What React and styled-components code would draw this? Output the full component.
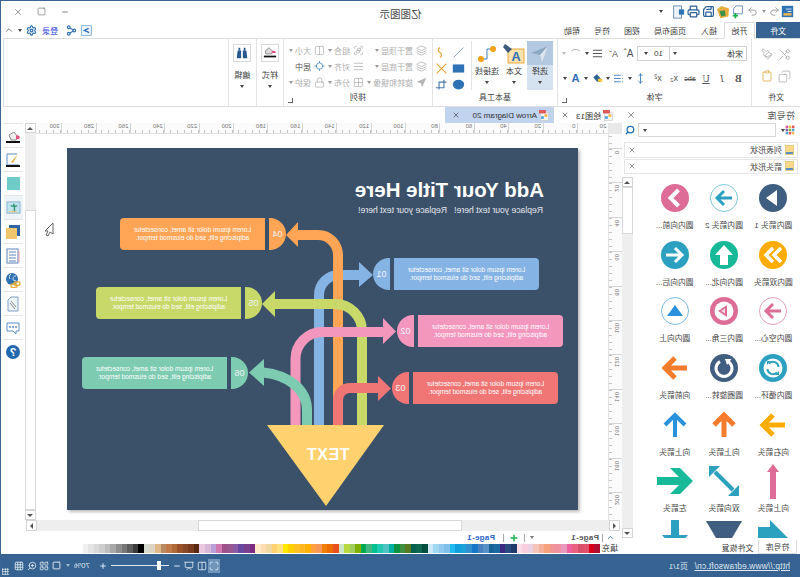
import React from 'react'
import styled, { createGlobalStyle } from 'styled-components'
import {
  X, Minus, Square, Undo2, Redo2, Save, Printer, Settings, Share2, Scissors, Copy, Clipboard,
  Lock, Search, Plus, ChevronUp, Grid3x3, ZoomIn, LayoutGrid, Maximize, Columns2, Presentation,
  AlignJustify, List, Layers, Group as GroupIcon, Grid2x2, Locate, MoveVertical, Paintbrush,
} from 'lucide-react'

// the reference is a horizontally flipped window, so the page is written the normal way round
// and Shell flips all of it, text included

const GlobalStyle = createGlobalStyle`
  html, body { margin: 0; padding: 0; background: #fff; overflow: hidden; }
  body { font-family: "Liberation Sans", "Noto Sans CJK SC", sans-serif; }
  * { box-sizing: border-box; }
`

const Shell = styled.div`
  width: 800px;
  height: 577px;
  display: flex;
  flex-direction: column;
  overflow: hidden;
  background: #fff;
  color: #3c3c3c;
  border-top: 1px solid #3a6592;
  border-right: 1px solid #3a6592;
  transform: scaleX(-1);
`

const Caret = styled.span`
  display: inline-block;
  width: 0;
  height: 0;
  flex: none;
  border-left: 2.5px solid transparent;
  border-right: 2.5px solid transparent;
  border-top: 3px solid ${p => p.$color || '#444'};
`

/* title bar */
const TitleBar = styled.div`
  height: 21px;
  flex: none;
  display: grid;
  grid-template-columns: 1fr auto 1fr;
  align-items: center;
`
const QuickBar = styled.div`
  display: flex;
  align-items: center;
  padding-left: 5px;
`
const QuickCell = styled.span`
  width: ${p => p.$w}px;
  height: 16px;
  display: flex;
  align-items: center;
  justify-content: center;
`
const Title = styled.div`
  font-size: 10.5px;
  color: #444;
  margin-top: 3px;
`
const WindowButtons = styled.div`
  display: flex;
  justify-content: flex-end;
  align-items: center;
  padding-right: 5px;
  color: #666;
`
const WindowButton = styled.span`
  width: 23.5px;
  display: flex;
  justify-content: center;
`

/* menu tabs */
const MenuBar = styled.div`
  height: 16px;
  flex: none;
  display: flex;
  align-items: stretch;
  font-size: 8px;
`
const FileTab = styled.div`
  width: 44px;
  margin-right: 1px;
  background: #366391;
  color: #fff;
  display: flex;
  align-items: center;
  justify-content: center;
`
const HomeTab = styled.div`
  width: 31px;
  border: 1px solid #dcdcdc;
  border-bottom: 1px solid #fff;
  margin-bottom: -1px;
  background: #fff;
  position: relative;
  z-index: 1;
  display: flex;
  align-items: center;
  justify-content: center;
`
const MenuItem = styled.div`
  margin-left: ${p => p.$gap}px;
  display: flex;
  align-items: center;
  white-space: nowrap;
`
const MenuRight = styled.div`
  margin-left: auto;
  padding-right: 3px;
  display: flex;
  align-items: center;
  gap: 4px;
`
const Login = styled.span`
  color: #2b3fe0;
  font-size: 8px;
  width: 17px;
  margin: 0 0 0 4px;
  white-space: nowrap;
`

/* ribbon */
const Ribbon = styled.div`
  height: 69px;
  flex: none;
  margin-right: 2px;
  display: flex;
  border: 1px solid #dedede;
  border-left: 0;
  background: #fff;
`
const Group = styled.div`
  width: ${p => p.$w}px;
  flex: ${p => (p.$w ? 'none' : '1')};
  display: flex;
  flex-direction: column;
  border-right: 1px solid #e3e3e3;
  position: relative;
  &:last-child { border-right: 0; }
`
const GroupBody = styled.div`
  flex: 1;
  display: flex;
  min-height: 0;
  padding: ${p => p.$pad || '0'};
`
const GroupLabel = styled.div`
  height: 15px;
  flex: none;
  font-size: 8px;
  text-align: center;
  line-height: 14px;
  color: #444;
`
const Launcher = styled.span`
  position: absolute;
  right: 4px;
  bottom: 3px;
  width: 5px;
  height: 5px;
  border-left: 1px solid #666;
  border-bottom: 1px solid #666;
`
const ClipGrid = styled.div`
  display: grid;
  grid-template-columns: 17px 17px;
  grid-auto-rows: 22px;
  padding: 4px 0 0 7px;
  align-items: center;
  justify-items: center;
  color: #a8a8a8;
`
const FontRows = styled.div`
  display: flex;
  flex-direction: column;
  width: 100%;
`
const FontRow = styled.div`
  height: ${p => p.$h}px;
  display: flex;
  align-items: center;
  padding-left: 4px;
  padding-top: 3px;
`
const FontCombo = styled.div`
  width: 110px;
  height: 15px;
  flex: none;
  margin-right: 1px;
  border: 1px solid #d0d0d0;
  display: flex;
  align-items: center;
  font-size: 8px;
`
const FontName = styled.span`
  flex: 1;
  padding-left: 3px;
`
const FontSize = styled.span`
  width: 32px;
  height: 100%;
  margin-left: 3px;
  border-left: 1px solid #d0d0d0;
  display: flex;
  align-items: center;
  justify-content: space-around;
  font-size: 8px;
  padding: 0 3px;
`
const FontTool = styled.span`
  width: ${p => p.$w || 16}px;
  flex: none;
  display: flex;
  align-items: center;
  justify-content: center;
  font-family: ${p => (p.$serif ? '"Liberation Serif", serif' : 'inherit')};
  font-weight: ${p => (p.$bold ? 700 : 400)};
  font-style: ${p => (p.$italic ? 'italic' : 'normal')};
  text-decoration: ${p => p.$deco || 'none'};
  font-size: ${p => p.$size || 9}px;
  color: ${p => p.$color || '#555'};
  white-space: nowrap;
`
const ToolButton = styled.div`
  width: ${p => p.$w}px;
  height: 49px;
  flex: none;
  display: flex;
  flex-direction: column;
  align-items: center;
  font-size: 8px;
  background: ${p => (p.$active ? 'linear-gradient(#b3c9e1 0 24px, #d5e2f0 24px)' : 'transparent')};
`
const ToolIcon = styled.div`
  height: 25px;
  display: flex;
  align-items: center;
  justify-content: center;
`
const ToolText = styled.div`
  height: 11px;
  line-height: 11px;
  margin-bottom: 4px;
  white-space: nowrap;
`
const VerticalRule = styled.div`
  width: 1px;
  height: 49px;
  background: #e3e3e3;
  margin: 0 4px 0 1px;
  flex: none;
`
const ShapeGrid = styled.div`
  display: grid;
  grid-template-columns: 17px 17px;
  grid-auto-rows: 16px;
  align-items: center;
  justify-items: center;
  padding-top: 3px;
`
const ArrangeGrid = styled.div`
  display: grid;
  grid-template-columns: 63px 39px 1fr;
  grid-auto-rows: 16px;
  padding: 3px 0 0 5px;
  width: 100%;
`
const ArrangeItem = styled.div`
  display: flex;
  align-items: center;
  gap: 2px;
  font-size: 8px;
  white-space: nowrap;
  color: ${p => (p.$on ? '#555' : '#adadad')};
`
const ArrangeIcon = styled.span`
  width: 11px;
  display: flex;
  justify-content: center;
  margin-right: 1px;
  flex: none;
`
const BigStack = styled.div`
  width: 100%;
  display: flex;
  flex-direction: column;
  align-items: center;
  font-size: 8px;
  color: #444;
  padding-top: 5px;
`
const BigIconBox = styled.div`
  width: 18px;
  height: 18px;
  border: 1px solid #d9d9d9;
  display: flex;
  align-items: center;
  justify-content: center;
  margin-bottom: 7px;
`
const BigCaret = styled.div`
  margin-top: 5px;
  display: flex;
`

/* workspace */
const Workspace = styled.div`
  flex: 1;
  min-height: 0;
  display: flex;
`
const Panel = styled.div`
  width: 178px;
  flex: none;
  display: flex;
  flex-direction: column;
`
const PanelHeader = styled.div`
  height: 16px;
  flex: none;
  display: flex;
  align-items: center;
  justify-content: space-between;
  padding: 0 4px 0 5px;
  font-size: 9px;
  letter-spacing: 0.3px;
  color: #555;
`
const SearchRow = styled.div`
  height: 14px;
  flex: none;
  display: flex;
  align-items: center;
  padding-left: 5px;
  margin-bottom: 5px;
`
const SearchInput = styled.div`
  width: 138px;
  height: 14px;
  margin-left: 5px;
  border: 1px solid #d8d8d8;
  display: flex;
  align-items: center;
  justify-content: flex-end;
  padding-right: 4px;
`
const SearchIcon = styled.span`
  margin-left: 3px;
  color: #1f6fb5;
  display: flex;
`
const ListRow = styled.div`
  height: 15.5px;
  flex: none;
  margin: 0 2px 1px 2px;
  border: 1px solid #e6e6e6;
  display: flex;
  align-items: center;
  gap: 3px;
  padding: 0 3px;
  font-size: 8px;
  color: #444;
`
const RowIcon = styled.span`
  width: 9px;
  height: 10px;
  flex: none;
  background: linear-gradient(#f9d98a 0 70%, #5b8fc4 70%);
  border: 1px solid #e7c97f;
`
const RowClose = styled.span`
  margin-left: auto;
  display: flex;
  color: #555;
`
const PanelBody = styled.div`
  height: 361px;
  flex: none;
  margin-top: 2px;
  display: flex;
  overflow: hidden;
`
const Gallery = styled.div`
  width: 167px;
  flex: none;
  padding-left: 2px;
  display: grid;
  grid-template-columns: repeat(3, 49.3px);
  grid-auto-rows: 56.7px;
  overflow: hidden;
`
const GalleryItem = styled.div`
  display: flex;
  flex-direction: column;
  align-items: center;
  padding-top: 3px;
`
const GalleryLabel = styled.div`
  margin-top: 5px;
  height: 10px;
  line-height: 10px;
  font-size: 7.8px;
  white-space: nowrap;
  color: #444;
`
const PanelTabs = styled.div`
  height: 14px;
  flex: none;
  margin-top: 2px;
  padding-left: 3px;
  display: flex;
  align-items: stretch;
  font-size: 8px;
`
const PanelTab = styled.div`
  width: ${p => p.$w}px;
  display: flex;
  align-items: center;
  justify-content: center;
  border: ${p => (p.$active ? '1px solid #dcdcdc' : '0')};
  border-top: 0;
  white-space: nowrap;
`

const ScrollTrack = styled.div`
  width: 11px;
  flex: none;
  display: flex;
  flex-direction: column;
  background: #eeeeee;
`
const ScrollButton = styled.div`
  width: 100%;
  height: 10px;
  flex: none;
  background: #fff;
  border: 1px solid #d4d4d4;
  display: flex;
  align-items: center;
  justify-content: center;
  font-size: 0;
`
const ScrollUp = styled.span`
  width: 0;
  height: 0;
  border-left: 3px solid transparent;
  border-right: 3px solid transparent;
  border-bottom: 3px solid #555;
`
const ScrollDown = styled(ScrollUp)`
  border-bottom: 0;
  border-top: 3px solid #555;
`
const ScrollGap = styled.div`
  height: ${p => p.$h}px;
  flex: ${p => (p.$h ? 'none' : '1')};
`
const ScrollThumb = styled.div`
  height: ${p => p.$h}px;
  flex: none;
  background: #fff;
  border: 1px solid #d8d8d8;
`

const EditorColumn = styled.div`
  flex: 1;
  min-width: 0;
  display: flex;
  flex-direction: column;
`
const DocTabs = styled.div`
  height: 16px;
  flex: none;
  display: flex;
  font-size: 8px;
`
const DocTab = styled.div`
  width: ${p => p.$w}px;
  display: flex;
  align-items: center;
  gap: 2px;
  padding: 0 7px 0 ${p => p.$pad}px;
  white-space: nowrap;
  background: ${p => (p.$active ? '#c1d3ee' : 'transparent')};
  color: #333;
`
const DocClose = styled.span`
  margin-left: auto;
  display: flex;
  color: #444;
`
const EditorRow = styled.div`
  height: 397px;
  flex: none;
  display: flex;
`
const CanvasArea = styled.div`
  flex: 1;
  min-width: 0;
  display: flex;
  flex-direction: column;
`
const RulerTop = styled.div`
  height: 11px;
  flex: none;
  display: flex;
`
const RulerCorner = styled.div`
  width: 14px;
  flex: none;
  background: #e9e9e9;
`
const RulerTrack = styled.div`
  flex: 1;
  min-width: 0;
  display: flex;
  overflow: hidden;
  background: #fbfbfb;
  border-bottom: 1px solid #e2e2e2;
`
const RulerCell = styled.div`
  width: 34.4px;
  flex: none;
  margin-left: ${p => (p.$first ? -4.4 : 0)}px;
  font-size: 6px;
  line-height: 7px;
  color: #777;
  padding-left: ${p => (p.$first ? 5 : 1.5)}px;
  border-left: 1px solid #d5d5d5;
  background: repeating-linear-gradient(90deg, #c4c4c4 0 1px, transparent 1px 6.88px) left bottom / 100% 3px no-repeat;
`
const CanvasRow = styled.div`
  flex: 1;
  min-height: 0;
  display: flex;
`
const RulerSide = styled.div`
  width: 14px;
  flex: none;
  display: flex;
  flex-direction: column;
  overflow: hidden;
  background: #fbfbfb;
  border-right: 1px solid #e2e2e2;
`
const RulerSideCell = styled.div`
  height: 34.4px;
  flex: none;
  margin-top: ${p => (p.$first ? -20.4 : 0)}px;
  font-size: 6px;
  color: #777;
  display: flex;
  justify-content: flex-start;
  padding: 2px 0 0 2px;
  border-top: 1px solid #d5d5d5;
  background: repeating-linear-gradient(180deg, #c4c4c4 0 1px, transparent 1px 6.88px) right top / 3px 100% no-repeat;
  span { writing-mode: vertical-rl; transform: rotate(180deg); height: fit-content; }
`
const Canvas = styled.div`
  flex: 1;
  min-width: 0;
  padding: 14px 0 0 30px;
  position: relative;
  overflow: hidden;
  background: #fff;
`
const Cursor = styled.svg`
  position: absolute;
  left: 554px;
  top: 88px;
`

/* slide */
const Slide = styled.div`
  width: 511px;
  height: 362px;
  position: relative;
  background: #3b5069;
  box-shadow: -2px 2px 3px #bdbdbd;
  overflow: hidden;
`
const SlideTitle = styled.div`
  position: absolute;
  left: 34px;
  top: 30px;
  font-size: 20.5px;
  font-weight: 700;
  color: #fff;
  white-space: nowrap;
`
const SlideSub = styled.div`
  position: absolute;
  left: 35px;
  top: 57px;
  font-size: 8.6px;
  color: #e4e8ee;
  white-space: pre;
`
const Arrows = styled.svg`
  position: absolute;
  left: 0;
  top: 0;
`
const Node = styled.div`
  position: absolute;
  left: ${p => p.$x}px;
  top: ${p => p.$y}px;
  height: 32px;
  display: flex;
  flex-direction: ${p => (p.$flip ? 'row-reverse' : 'row')};
  gap: 4px;
  color: #fff;
`
const NodeCard = styled.div`
  width: 145px;
  background: ${p => p.$color};
  border-radius: ${p => (p.$flip ? '0 4px 4px 0' : '4px 0 0 4px')};
  font-size: 6.6px;
  line-height: 8.5px;
  text-align: center;
  display: flex;
  align-items: center;
  justify-content: center;
  white-space: pre;
`
const NodeCap = styled.div`
  width: 17px;
  background: ${p => p.$color};
  border-radius: ${p => (p.$flip ? '16px 0 0 16px' : '0 16px 16px 0')};
  font-size: 9px;
  color: #eef2f4;
  display: flex;
  align-items: center;
  justify-content: center;
`

const HScrollBar = styled.div`
  height: 11px;
  flex: none;
  display: flex;
  margin: 0 25px 0 2px;
  background: #eeeeee;
`
const HButton = styled.div`
  width: 11px;
  flex: none;
  background: #fff;
  border: 1px solid #d4d4d4;
  display: flex;
  align-items: center;
  justify-content: center;
`
const HArrow = styled.span`
  width: 0;
  height: 0;
  border-top: 3px solid transparent;
  border-bottom: 3px solid transparent;
  ${p => (p.$dir === 'left' ? 'border-right: 3px solid #555;' : 'border-left: 3px solid #555;')}
`
const HThumb = styled.div`
  width: 264px;
  flex: none;
  margin-left: ${p => p.$left}px;
  margin-right: auto;
  background: #fff;
  border: 1px solid #d8d8d8;
`
const PageTabs = styled.div`
  height: 13px;
  flex: none;
  display: flex;
  align-items: center;
  font-size: 8px;
  font-weight: 700;
  letter-spacing: 0.3px;
  padding-left: 7px;
  color: #555;
`
const PageLink = styled.span`
  color: #2b62c4;
  margin-left: 3px;
`
const PageCaret = styled(Caret)`
  margin-left: 37px;
`
const PageRule = styled.span`
  width: 1px;
  height: 8px;
  background: #aaa;
  margin: 0 ${p => p.$m || 5}px;
`
const PaletteRow = styled.div`
  height: 10px;
  flex: none;
  display: flex;
  align-items: stretch;
  padding-left: 4px;
  font-size: 8px;
`
const PaletteLabel = styled.span`
  width: 18px;
  flex: none;
  line-height: 10px;
`
const Swatch = styled.span`
  width: 5.57px;
  height: 9px;
  flex: none;
  background: ${p => p.$color};
`

const ToolStrip = styled.div`
  width: 22px;
  flex: none;
  padding: 0 3px 0 0;
  margin-left: 2px;
`
const StripButton = styled.div`
  height: 24px;
  border-top: 1px solid #e4e4e4;
  display: flex;
  align-items: center;
  justify-content: center;
  background: ${p => (p.$active ? '#eef3f8' : 'transparent')};
`

/* status bar */
const StatusBar = styled.div`
  height: 23px;
  flex: none;
  margin-right: -1px;
  background: #366391;
  color: #dfe8f1;
  display: flex;
  align-items: center;
  font-size: 8px;
  padding-left: 10px;
  position: relative;
`
const StatusLink = styled.span`
  text-decoration: underline;
  font-size: 8.4px;
  letter-spacing: 0.2px;
  width: 102px;
  white-space: nowrap;
`
const StatusTools = styled.div`
  margin-left: auto;
  display: flex;
  align-items: center;
  color: #dfe8f1;
  padding-right: 13px;
`
const StatusIcon = styled.span`
  width: ${p => p.$w || 12.5}px;
  height: 14px;
  display: flex;
  align-items: center;
  justify-content: center;
  background: ${p => (p.$active ? '#6f95bb' : 'transparent')};
`
const ZoomTrack = styled.span`
  width: 58px;
  height: 1px;
  background: #dfe8f1;
  position: relative;
  margin: 0 3px;
`
const ZoomThumb = styled.span`
  position: absolute;
  left: 8px;
  top: -4px;
  width: 4px;
  height: 9px;
  background: #fff;
`
const ZoomValue = styled.span`
  width: 24px;
  text-align: center;
  font-size: 8px;
  margin: 0 0 0 5px;
`
const ZoomCaret = styled(Caret)`
  margin-right: 3px;
`
const Grip = styled.span`
  position: absolute;
  right: 2px;
  bottom: 2px;
  width: 7px;
  height: 7px;
  background: radial-gradient(#dfe8f1 0 0.8px, transparent 1px) 0 0 / 2.5px 2.5px;
`

const NAVY = '#3f5e80'
const TEAL = '#2ca0bf'
const PINK = '#dd6d96'
const GOLD = '#ffac00'
const MINT = '#17b999'
const ORANGE = '#f47c2c'
const BLUE = '#2a92dc'

const Tile = ({ children }) => <svg width="36" height="36" viewBox="0 0 36 36">{children}</svg>
const Disc = ({ fill }) => <circle cx="18" cy="18" r="14" fill={fill} />
const Ring = ({ stroke }) => <circle cx="18" cy="18" r="13.5" fill="#fff" stroke={stroke} />
const Line = ({ d, color, w = 3 }) => <path d={d} fill="none" stroke={color} strokeWidth={w} />

const symbols = [
  { label: '圆内箭头 1', art: <><Disc fill={NAVY} /><polygon points="14,10 25,18 14,26" fill="#fff" /></> },
  { label: '圆内箭头 2', art: <><Ring stroke="#7cc8dc" /><Line d="M10 18H25M18 11l7 7-7 7" color={TEAL} /></> },
  { label: '圆内向前...', art: <><Disc fill={PINK} /><Line d="M14.5 10l8 8-8 8" color="#fff" w={4} /></> },
  { label: '圆内双箭头', art: <><Disc fill={GOLD} /><Line d="M10 11l7 7-7 7M18 11l7 7-7 7" color="#fff" w={3.5} /></> },
  { label: '圆内向北...', art: <><Disc fill={MINT} /><polygon points="18,8 27,18 22,18 22,28 14,28 14,18 9,18" fill="#fff" /></> },
  { label: '圆内向后...', art: <><Disc fill={TEAL} /><Line d="M27 18H11M18 11l-7 7 7 7" color="#fff" /></> },
  { label: '圆内空心...', art: <><Ring stroke="#eda0b8" /><Line d="M10 18H25M18 11l7 7-7 7" color={PINK} /></> },
  { label: '圆内三角...', art: <><Disc fill={PINK} /><circle cx="18" cy="18" r="9.5" fill="#fff" /><polygon points="15,12 24,18 15,24" fill={PINK} /><polygon points="17,15.5 21,18 17,20.5" fill="#f7d5e1" /></> },
  { label: '圆内向上', art: <><Ring stroke="#7bbce8" /><polygon points="18,12 26,23 10,23" fill={BLUE} /></> },
  { label: '圆内循环...', art: <><Disc fill={TEAL} /><circle cx="18" cy="18" r="9.5" fill="#fff" /><Line d="M12.5 17a5.5 5.5 0 0 1 9.5-3.5M23.5 19a5.5 5.5 0 0 1-9.5 3.5" color={TEAL} w={2} /><polygon points="20.5,11 24,11 24,15" fill={TEAL} /><polygon points="15.5,25 12,25 12,21" fill={TEAL} /></> },
  { label: '圆圈旋转...', art: <><Disc fill={NAVY} /><Line d="M14 11.5a8 8 0 1 0 8 0" color="#fff" /><polygon points="10.5,9 17,9 15,15" fill="#fff" /></> },
  { label: '向前箭头', art: <Line d="M6 18H27M18 8l10 10-10 10" color={ORANGE} w={5} /> },
  { label: '向右箭头', art: <Line d="M6 18H27M18 8l10 10-10 10" color={GOLD} w={5} /> },
  { label: '向上箭头', art: <Line d="M18 30V8M8 18L18 8l10 10" color={ORANGE} w={5} /> },
  { label: '向上箭头', art: <Line d="M18 30V8M8 18L18 8l10 10" color={BLUE} w={4} /> },
  { label: '向上箭头', art: <><rect x="15" y="8" width="6" height="28" fill={PINK} /><polygon points="18,1 24,9 12,9" fill={PINK} /></> },
  { label: '双向箭头', art: <><Line d="M27 9L9 27" color={TEAL} w={4} /><polygon points="33,3 33,14 22,3" fill={TEAL} /><polygon points="3,33 3,22 14,33" fill={TEAL} /></> },
  { label: '左箭头', art: <polygon points="0,18 13,5 23,5 14,14 36,14 36,22 14,22 23,31 13,31" fill={MINT} /> },
  { label: '', art: <polygon points="3,18 21,0 21,7 33,7 33,36 3,36" fill={TEAL} /> },
  { label: '', art: <polygon points="0,1 36,1 26,18 10,18" fill={NAVY} /> },
  { label: '', art: <polygon points="14,0 22,0 22,15 31,15 18,30 5,15 14,15" fill={TEAL} /> },
]

const nodes = [
  { id: '01', color: '#85b3e3', x: 39, y: 110 },
  { id: '02', color: '#f497bd', x: 15, y: 167 },
  { id: '03', color: '#f07676', x: 20, y: 224 },
  { id: '04', color: '#ffa555', x: 292, y: 70, flip: true },
  { id: '05', color: '#c8d96a', x: 316, y: 139, flip: true },
  { id: '06', color: '#7dcbb1', x: 330, y: 209, flip: true },
]

const arrows = [
  { color: '#85b3e3', d: 'M259 278V147A20 20 0 0 0 239 127H218', head: '219,114 205,127 219,139' },
  { color: '#ffa555', d: 'M240 278V107A20 20 0 0 1 260 87H281', head: '280,74 292,87 280,99' },
  { color: '#c8d96a', d: 'M216 278V183A27 27 0 0 1 243 156H304', head: '303,143 316,156 303,169' },
  { color: '#f497bd', d: 'M282.5 278V211A27 27 0 0 0 255.5 184H194', head: '195,170 182,183.5 195,196' },
  { color: '#f07676', d: 'M240 278V252A12 12 0 0 0 228 240H199', head: '200,228 187,240.5 200,253' },
  { color: '#7dcbb1', d: 'M271 278V262C271 241 290 227 315 224.5', head: '314,211 329,224.5 314,238' },
]

// image order, right to left in the flipped page
const swatches = [
  '#efefef', '#e4e4e4', '#d9d9d9', '#cdcdcd', '#bdbdbd', '#a8a8a8', '#8f8f8f', '#777', '#5e5e5e', '#3c3c3c', '#000',
  '#d5dccf', '#dcd5c4', '#e0b888', '#b88a60', '#c07a4a', '#b06838', '#9c5228', '#8a4a2a', '#7a3a20', '#5a2a10',
  '#ecc8e0', '#d8b8d8', '#b8a0d8', '#d078b0', '#a05088', '#9a5890', '#8a5ca8', '#6a4aa0', '#7a4090', '#7a2a80',
  '#fde8c8', '#fddcb0', '#f0d8a0', '#fdd070', '#fde080', '#ffe800', '#ffd000', '#ffc020', '#ffb820', '#ffb000',
  '#ffa040', '#f89858', '#f08000', '#ec6c00', '#e85020',
  '#cce4c8', '#b8d840', '#a0cc60', '#80b000', '#00a850', '#40b880', '#00c090', '#20c8b0', '#50c0c0', '#00b0a0', '#109040',
  '#3e9040', '#5a7a20', '#006050', '#106850', '#005040',
  '#cfe8f5', '#a0d8f0', '#90c8f0', '#80c0e8', '#20b8f0', '#10a0e0', '#20a0d8', '#3090d0', '#1878c8', '#4880c0',
  '#5890c8', '#186098', '#1a6aa0', '#3b2a80', '#2b4a7f', '#1f3a68',
  '#fbdde8', '#f9cfe0', '#e8d0e0', '#f5c5b9', '#f5b09b', '#f7a07a', '#f29595', '#f090a0', '#e89abf', '#ee5fa0',
  '#e8607d', '#d84f6c', '#e0506a', '#d9001b', '#b01030',
].reverse()

const Small = ({ children, s = 12 }) => <svg width={s} height={s} viewBox="0 0 16 16">{children}</svg>

const DocIcon = () => (
  <Small s={11}>
    <rect x="2" y="4" width="12" height="11" fill="#f5f5f5" stroke="#c9c9c9" />
    <rect x="4" y="6" width="4" height="4" fill="#f2b84b" />
    <rect x="9" y="9" width="4" height="4" fill="#4fa3d9" />
    <rect x="6" y="0" width="10" height="5" fill="#e05a5a" />
  </Small>
)

const PaletteIcon = () => (
  <Small s={10}>
    <rect x="1" y="1" width="4" height="4" fill="#e8554e" />
    <rect x="6" y="1" width="4" height="4" fill="#f2b84b" />
    <rect x="11" y="1" width="4" height="4" fill="#e05aa0" />
    <rect x="1" y="6" width="4" height="4" fill="#4fa3d9" />
    <rect x="6" y="6" width="4" height="4" fill="#7dbb4a" />
    <rect x="11" y="6" width="4" height="4" fill="#8a5ca8" />
    <rect x="1" y="11" width="4" height="4" fill="#f2b84b" />
    <rect x="6" y="11" width="4" height="4" fill="#e8554e" />
    <rect x="11" y="11" width="4" height="4" fill="#4fa3d9" />
  </Small>
)

const strip = [
  <Small s={16}><path d="M3 9l4-5 5 3-2 5H5z" fill="#eee" stroke="#888" /><path d="M1 9c2-2 3-2 4-1v3H2z" fill="#e44f7c" /><rect x="1" y="13" width="14" height="2" fill="#111" /></Small>,
  <Small s={16}><path d="M4 2h10v11H2" fill="#fff" stroke="#5b8fc4" /><path d="M3 2l7 8-2 1z" fill="#eab54a" /><rect x="1" y="13" width="14" height="2" fill="#111" /></Small>,
  <Small s={15}><rect x="1" y="1" width="14" height="14" rx="1" fill="#6ecbc7" /></Small>,
  <Small s={15}><rect x="1" y="2" width="14" height="12" fill="#bfe3ee" stroke="#8db4cc" /><path d="M3 13c3-2 6-2 11 0z" fill="#e8cf86" /><path d="M7 12V7M7 7L4 6M7 7l4-1M7 7l1-3" stroke="#2f9a72" fill="none" strokeWidth="1.5" /></Small>,
  <Small s={16}><rect x="1" y="1" width="11" height="11" fill="#2f64a8" /><rect x="4" y="4" width="11" height="11" fill="#f1c76e" /></Small>,
  <Small s={16}><rect x="3" y="1" width="11" height="14" fill="#fff" stroke="#5b84b4" /><path d="M5 4h7M5 7h7M5 10h7M5 13h7" stroke="#5b84b4" /><path d="M2 3v11" stroke="#e49aa8" /></Small>,
  <Small s={16}><circle cx="9" cy="7" r="6" fill="#2f6fb4" /><path d="M5 4c2 0 3 1 3 3s-2 2-3 1M10 2c2 1 2 4 1 5" fill="none" stroke="#cfe3f4" /><rect x="1" y="10" width="6" height="3.5" rx="1.7" fill="none" stroke="#e9ae3d" strokeWidth="1.4" /><rect x="4" y="12" width="6" height="3.5" rx="1.7" fill="none" stroke="#e9ae3d" strokeWidth="1.4" /></Small>,
  <Small s={16}><path d="M3 1h7l3 3v11H3z" fill="#eef3f8" stroke="#7f9fc4" /><path d="M5 11l5-6M6 13l5-6" stroke="#8a8a8a" /></Small>,
  <Small s={16}><path d="M2 3h12v8H8l-3 3v-3H2z" fill="#fff" stroke="#5b8fc4" /><circle cx="5" cy="7" r="1" fill="#5b8fc4" /><circle cx="8" cy="7" r="1" fill="#5b8fc4" /><circle cx="11" cy="7" r="1" fill="#5b8fc4" /></Small>,
  <Small s={16}><circle cx="8" cy="8" r="7" fill="#2268ae" /><text x="8" y="12" fontSize="11" fontWeight="700" textAnchor="middle" fill="#fff">?</text></Small>,
]

const rulerTop = [20, 0, 20, 40, 60, 80, 100, 120, 140, 160, 180, 200, 220, 240, 260, 280, 300]
const rulerSide = [20, 0, 20, 40, 60, 80, 100, 120, 140, 160, 180, 200]

function ArrangeCell({ icon, label, on, caret = true }) {
  return (
    <ArrangeItem $on={on}>
      <ArrangeIcon>{icon}</ArrangeIcon>
      {label}
      {caret && <Caret $color="#999" />}
    </ArrangeItem>
  )
}

function Ribbons() {
  const gray = { size: 11, strokeWidth: 1.6 }
  return (
    <Ribbon>
      <Group $w={49}>
        <GroupBody>
          <ClipGrid>
            <Scissors size={13} strokeWidth={1.4} />
            <Paintbrush size={12} strokeWidth={1.6} />
            <Copy size={13} strokeWidth={1.4} />
            <Clipboard size={12} strokeWidth={1.6} color="#e2a63c" />
          </ClipGrid>
        </GroupBody>
        <GroupLabel>文件</GroupLabel>
      </Group>
      <Group $w={194}>
        <GroupBody>
          <FontRows>
            <FontRow $h={26}>
              <FontCombo>
                <FontName>宋体</FontName>
                <Caret />
                <FontSize>10<Caret /></FontSize>
              </FontCombo>
              <FontTool $size={10} $w={15}>Aˆ</FontTool>
              <FontTool $size={9} $w={15}>Aˇ</FontTool>
              <FontTool $w={17}><AlignJustify size={11} strokeWidth={2.4} /></FontTool>
              <Caret />
              <FontTool $w={19} $color="#aaa">⌒</FontTool>
              <Caret $color="#bbb" />
            </FontRow>
            <FontRow $h={23}>
              <FontTool $bold $serif $size={10} $w={17}>B</FontTool>
              <FontTool $italic $serif $size={10}>I</FontTool>
              <FontTool $deco="underline" $serif $size={10}>U</FontTool>
              <FontTool $deco="line-through" $size={7}>abc</FontTool>
              <FontTool $size={9}>x₂</FontTool>
              <FontTool $size={9}>x²</FontTool>
              <FontTool $w={18}><MoveVertical size={11} color="#3f7fbf" /></FontTool>
              <Caret />
              <FontTool $w={18}><List size={11} color="#3f7fbf" /></FontTool>
              <Caret />
              <FontTool $w={18}>
                <Small s={12}><path d="M2 10l6-7 5 4-5 6H4z" fill="#2e5f95" /><rect x="1" y="9" width="6" height="4" fill="#f1c232" /></Small>
              </FontTool>
              <Caret />
              <FontTool $w={17} $bold $size={11} $color="#2f6fb4">A</FontTool>
              <Caret />
            </FontRow>
          </FontRows>
        </GroupBody>
        <GroupLabel>字体</GroupLabel>
        <Launcher />
      </Group>
      <Group $w={125}>
        <GroupBody $pad="2px 0 0 4px">
          <ToolButton $w={26} $active>
            <ToolIcon>
              <svg width="20" height="20" viewBox="0 0 20 20"><polygon points="2,2 19,9 10,11 8,19" fill="#8ea8c3" /><polygon points="2,2 10,11 8,19" fill="#dbe5ef" /></svg>
            </ToolIcon>
            <ToolText>选择</ToolText>
            <Caret />
          </ToolButton>
          <ToolButton $w={26}>
            <ToolIcon>
              <svg width="22" height="20" viewBox="0 0 22 20">
                <rect x="1" y="5" width="16" height="14" fill="#fbe3b0" stroke="#eba93d" />
                <text x="9" y="17" fontSize="13" fontWeight="700" textAnchor="middle" fill="#2f6fb4">A</text>
                <polygon points="13,5 20,0 22,3 17,9" fill="#3c5a7c" />
              </svg>
            </ToolIcon>
            <ToolText>文本</ToolText>
            <Caret />
          </ToolButton>
          <ToolButton $w={28}>
            <ToolIcon>
              <svg width="22" height="20" viewBox="0 0 22 20">
                <path d="M5 5H11V15H17" fill="none" stroke="#3f7fbf" />
                <circle cx="5" cy="5" r="3" fill="#f2a21b" />
                <circle cx="17" cy="15" r="3" fill="#f2a21b" />
              </svg>
            </ToolIcon>
            <ToolText>连接线</ToolText>
            <Caret />
          </ToolButton>
          <VerticalRule />
          <ShapeGrid>
            <Small s={13}><path d="M2 2l12 12" stroke="#6f93b8" /></Small>
            <Small s={13}><path d="M10 2a6 4 0 0 1 0 6a6 4 0 0 0 0 6" fill="none" stroke="#e9a63b" strokeWidth="1.5" /></Small>
            <Small s={13}><rect x="1" y="3" width="14" height="10" fill="#2f72b5" /></Small>
            <Small s={13}><path d="M2 2l12 12M14 2L2 14" stroke="#e9a63b" strokeWidth="1.4" /></Small>
            <Small s={13}><ellipse cx="8" cy="8" rx="7" ry="6" fill="#2f72b5" /></Small>
            <Small s={13}><path d="M5 2v10h10M2 5h9v9" fill="none" stroke="#4d7ca8" strokeWidth="1.4" /></Small>
          </ShapeGrid>
        </GroupBody>
        <GroupLabel>基本工具</GroupLabel>
      </Group>
      <Group $w={149}>
        <GroupBody>
          <ArrangeGrid>
            <ArrangeCell icon={<Layers {...gray} />} label="置于顶层" />
            <ArrangeCell icon={<GroupIcon {...gray} />} label="组合" />
            <ArrangeCell icon={<Columns2 {...gray} />} label="大小" />
            <ArrangeCell icon={<Layers {...gray} />} label="置于底层" />
            <ArrangeCell icon={<AlignJustify {...gray} />} label="对齐" />
            <ArrangeCell on caret={false} icon={<Locate size={12} strokeWidth={1.6} color="#3f7fbf" />} label="居中" />
            <ArrangeCell icon={<Small s={11}><polygon points="1,1 15,7 9,9 7,15" fill="#b5b5b5" /></Small>} label="旋转和镜像" />
            <ArrangeCell icon={<Grid2x2 {...gray} />} label="分布" />
            <ArrangeCell icon={<Lock {...gray} />} label="保护" />
          </ArrangeGrid>
        </GroupBody>
        <GroupLabel>排列</GroupLabel>
        <Launcher />
      </Group>
      <Group $w={27}>
        <BigStack>
          <BigIconBox>
            <Small s={14}><path d="M5 6l4-4 4 3v4H6z" fill="#ddd" stroke="#888" /><path d="M1 7c2-2 3-2 5-1v2H2z" fill="#e44f7c" /><rect x="1" y="11" width="14" height="2" fill="#111" /></Small>
          </BigIconBox>
          样式
          <BigCaret><Caret /></BigCaret>
        </BigStack>
      </Group>
      <Group $w={28}>
        <BigStack>
          <BigIconBox>
            <Small s={14}><path d="M2 14l1-9h4v9zM9 14V5h4l1 9z" fill="#25598f" /><path d="M4 5V2h2v3M10 5V2h2v3" fill="#25598f" /></Small>
          </BigIconBox>
          编辑
          <BigCaret><Caret /></BigCaret>
        </BigStack>
      </Group>
      <Group />
    </Ribbon>
  )
}

function SlideView() {
  return (
    <Slide>
      <SlideTitle>Add Your Title Here</SlideTitle>
      <SlideSub>{'Replace your text here!   Replace your text here!'}</SlideSub>
      <Arrows width="511" height="362" viewBox="0 0 511 362">
        {arrows.map(a => (
          <g key={a.color}>
            <path d={a.d} fill="none" stroke={a.color} strokeWidth="10" />
            <polygon points={a.head} fill={a.color} />
          </g>
        ))}
        <polygon points="194,277 311,277 252,358" fill="#ffd16f" />
        <text x="250" y="312" fontSize="16" fontWeight="700" letterSpacing="0.5" textAnchor="middle" fill="#fff">TEXT</text>
      </Arrows>
      {nodes.map(n => (
        <Node key={n.id} $x={n.x} $y={n.y} $flip={n.flip}>
          <NodeCard $color={n.color} $flip={n.flip}>{'Lorem ipsum dolor sit amet, consectetur\nadipiscing elit, sed do eiusmod tempor.'}</NodeCard>
          <NodeCap $color={n.color} $flip={n.flip}>{n.id}</NodeCap>
        </Node>
      ))}
    </Slide>
  )
}

export default function App() {
  return (
    <>
      <GlobalStyle />
      <Shell>
        <TitleBar>
          <QuickBar>
            <QuickCell $w={14}>
              <Small s={13}><rect x="1" y="1" width="14" height="14" fill="#2f72b5" /><path d="M3 5h7M3 8h5" stroke="#fff" /><rect x="3" y="10" width="10" height="3" fill="#f2b84b" /></Small>
            </QuickCell>
            <QuickCell $w={12}><Undo2 size={11} color="#999" /></QuickCell>
            <QuickCell $w={10}><Caret $color="#999" /></QuickCell>
            <QuickCell $w={13}><Redo2 size={11} color="#999" /></QuickCell>
            <QuickCell $w={15}>
              <Small s={14}><path d="M3 1h7l3 3v6H3z" fill="#fff" stroke="#5b84b4" /><path d="M11 9v6M8 12h6" stroke="#19b04b" strokeWidth="2" /></Small>
            </QuickCell>
            <QuickCell $w={15}>
              <Small s={14}><path d="M1 4l9-3 5 4-4 10-9-2z" fill="#e9ae3d" /><path d="M6 6l6 1-2 6-5-1z" fill="#3f8f4f" /></Small>
            </QuickCell>
            <QuickCell $w={15}><Save size={13} color="#2b5f96" strokeWidth={2.2} /></QuickCell>
            <QuickCell $w={15}><Printer size={13} color="#2b5f96" strokeWidth={2.2} /></QuickCell>
            <QuickCell $w={15}>
              <Small s={14}><path d="M4 1h9v14H4z" fill="#eef3f8" stroke="#5b84b4" /><rect x="1" y="5" width="6" height="6" fill="#2f72b5" /></Small>
            </QuickCell>
            <QuickCell $w={20}><Caret /></QuickCell>
          </QuickBar>
          <Title>亿图图示</Title>
          <WindowButtons>
            <WindowButton><Minus size={8} strokeWidth={2.5} /></WindowButton>
            <WindowButton><Square size={9} strokeWidth={1.6} /></WindowButton>
            <WindowButton><X size={10} strokeWidth={1.6} /></WindowButton>
          </WindowButtons>
        </TitleBar>
        <MenuBar>
          <FileTab>文件</FileTab>
          <HomeTab>开始</HomeTab>
          <MenuItem $gap={7}>插入</MenuItem>
          <MenuItem $gap={15}>页面布局</MenuItem>
          <MenuItem $gap={14}>视图</MenuItem>
          <MenuItem $gap={14}>符号</MenuItem>
          <MenuItem $gap={14}>帮助</MenuItem>
          <MenuRight>
            <Small s={11}><rect x="1" y="1" width="14" height="14" fill="#eef5fb" stroke="#5b9bd0" /><path d="M4 11L11 8 5 5" fill="none" stroke="#2f72b5" strokeWidth="2" /></Small>
            <Share2 size={11} color="#2f72b5" strokeWidth={2.4} />
            <Login>登录</Login>
            <Settings size={11} color="#2f72b5" strokeWidth={2.6} />
            <Caret />
            <ChevronUp size={10} color="#666" />
          </MenuRight>
        </MenuBar>
        <Ribbons />
        <Workspace>
          <Panel>
            <PanelHeader>符号库<X size={10} strokeWidth={1.5} /></PanelHeader>
            <SearchRow>
              <PaletteIcon />
              <Caret />
              <SearchInput><Caret /></SearchInput>
              <SearchIcon><Search size={10} strokeWidth={3} /></SearchIcon>
            </SearchRow>
            <ListRow><RowIcon />列表形状<RowClose><X size={8} /></RowClose></ListRow>
            <ListRow><RowIcon />箭头形状<RowClose><X size={8} /></RowClose></ListRow>
            <PanelBody>
              <Gallery>
                {symbols.map((s, i) => (
                  <GalleryItem key={i}>
                    <Tile>{s.art}</Tile>
                    <GalleryLabel>{s.label}</GalleryLabel>
                  </GalleryItem>
                ))}
              </Gallery>
              <ScrollTrack>
                <ScrollButton><ScrollUp /></ScrollButton>
                <ScrollThumb $h={47} />
                <ScrollGap />
                <ScrollButton><ScrollDown /></ScrollButton>
              </ScrollTrack>
            </PanelBody>
            <PanelTabs>
              <PanelTab $w={39} $active>符号库</PanelTab>
              <PanelTab $w={41}>文件恢复</PanelTab>
            </PanelTabs>
          </Panel>
          <EditorColumn>
            <DocTabs>
              <DocTab $w={68} $pad={8}><DocIcon />绘图13<DocClose><X size={8} /></DocClose></DocTab>
              <DocTab $w={109} $pad={4} $active><DocIcon />Arrow Diagram 20<DocClose><X size={8} /></DocClose></DocTab>
            </DocTabs>
            <EditorRow>
              <CanvasArea>
                <RulerTop>
                  <RulerCorner />
                  <RulerTrack>
                    {rulerTop.map((v, i) => <RulerCell key={i} $first={i === 0}>{v}</RulerCell>)}
                  </RulerTrack>
                </RulerTop>
                <CanvasRow>
                  <RulerSide>
                    {rulerSide.map((v, i) => <RulerSideCell key={i} $first={i === 0}><span>{v}</span></RulerSideCell>)}
                  </RulerSide>
                  <Canvas>
                    <SlideView />
                    <Cursor width="10" height="15" viewBox="0 0 10 15">
                      <path d="M1 1v11l3-2 2 4 2-1-2-4h3z" fill="#fff" stroke="#666" />
                    </Cursor>
                  </Canvas>
                </CanvasRow>
              </CanvasArea>
              <ScrollTrack>
                <ScrollButton><ScrollUp /></ScrollButton>
                <ScrollGap $h={77} />
                <ScrollThumb $h={300} />
                <ScrollButton><ScrollDown /></ScrollButton>
              </ScrollTrack>
              <ToolStrip>
                {strip.map((icon, i) => <StripButton key={i} $active={i === 3}>{icon}</StripButton>)}
              </ToolStrip>
            </EditorRow>
            <HScrollBar>
              <HButton><HArrow $dir="left" /></HButton>
              <HThumb $left={147} />
              <HButton><HArrow $dir="right" /></HButton>
            </HScrollBar>
            <PageTabs>
              <ChevronUp size={9} color="#2f6fb4" strokeWidth={2.4} />
              <PageRule $m={3} />
              Page-1
              <PageCaret $color="#777" />
              <PageRule />
              <Plus size={10} color="#19b04b" strokeWidth={3.4} />
              <PageRule />
              <PageLink>Page-1</PageLink>
            </PageTabs>
            <PaletteRow>
              <PaletteLabel>填充</PaletteLabel>
              {swatches.map((c, i) => <Swatch key={i} $color={c} />)}
            </PaletteRow>
          </EditorColumn>
        </Workspace>
        <StatusBar>
          <StatusLink>http://www.edrawsoft.cn/</StatusLink>
          页1/1
          <StatusTools>
            <StatusIcon $active><Maximize size={10} /></StatusIcon>
            <StatusIcon><Columns2 size={10} /></StatusIcon>
            <StatusIcon><Presentation size={10} /></StatusIcon>
            <StatusIcon $w={11}><Minus size={8} strokeWidth={3} /></StatusIcon>
            <ZoomTrack><ZoomThumb /></ZoomTrack>
            <StatusIcon $w={9}><Plus size={8} strokeWidth={3} /></StatusIcon>
            <ZoomValue>70%</ZoomValue>
            <ZoomCaret $color="#9db6cf" />
            <StatusIcon><Square size={9} strokeWidth={2.5} /></StatusIcon>
            <StatusIcon><LayoutGrid size={10} /></StatusIcon>
            <StatusIcon><ZoomIn size={10} /></StatusIcon>
            <StatusIcon><Grid3x3 size={10} /></StatusIcon>
          </StatusTools>
          <Grip />
        </StatusBar>
      </Shell>
    </>
  )
}
